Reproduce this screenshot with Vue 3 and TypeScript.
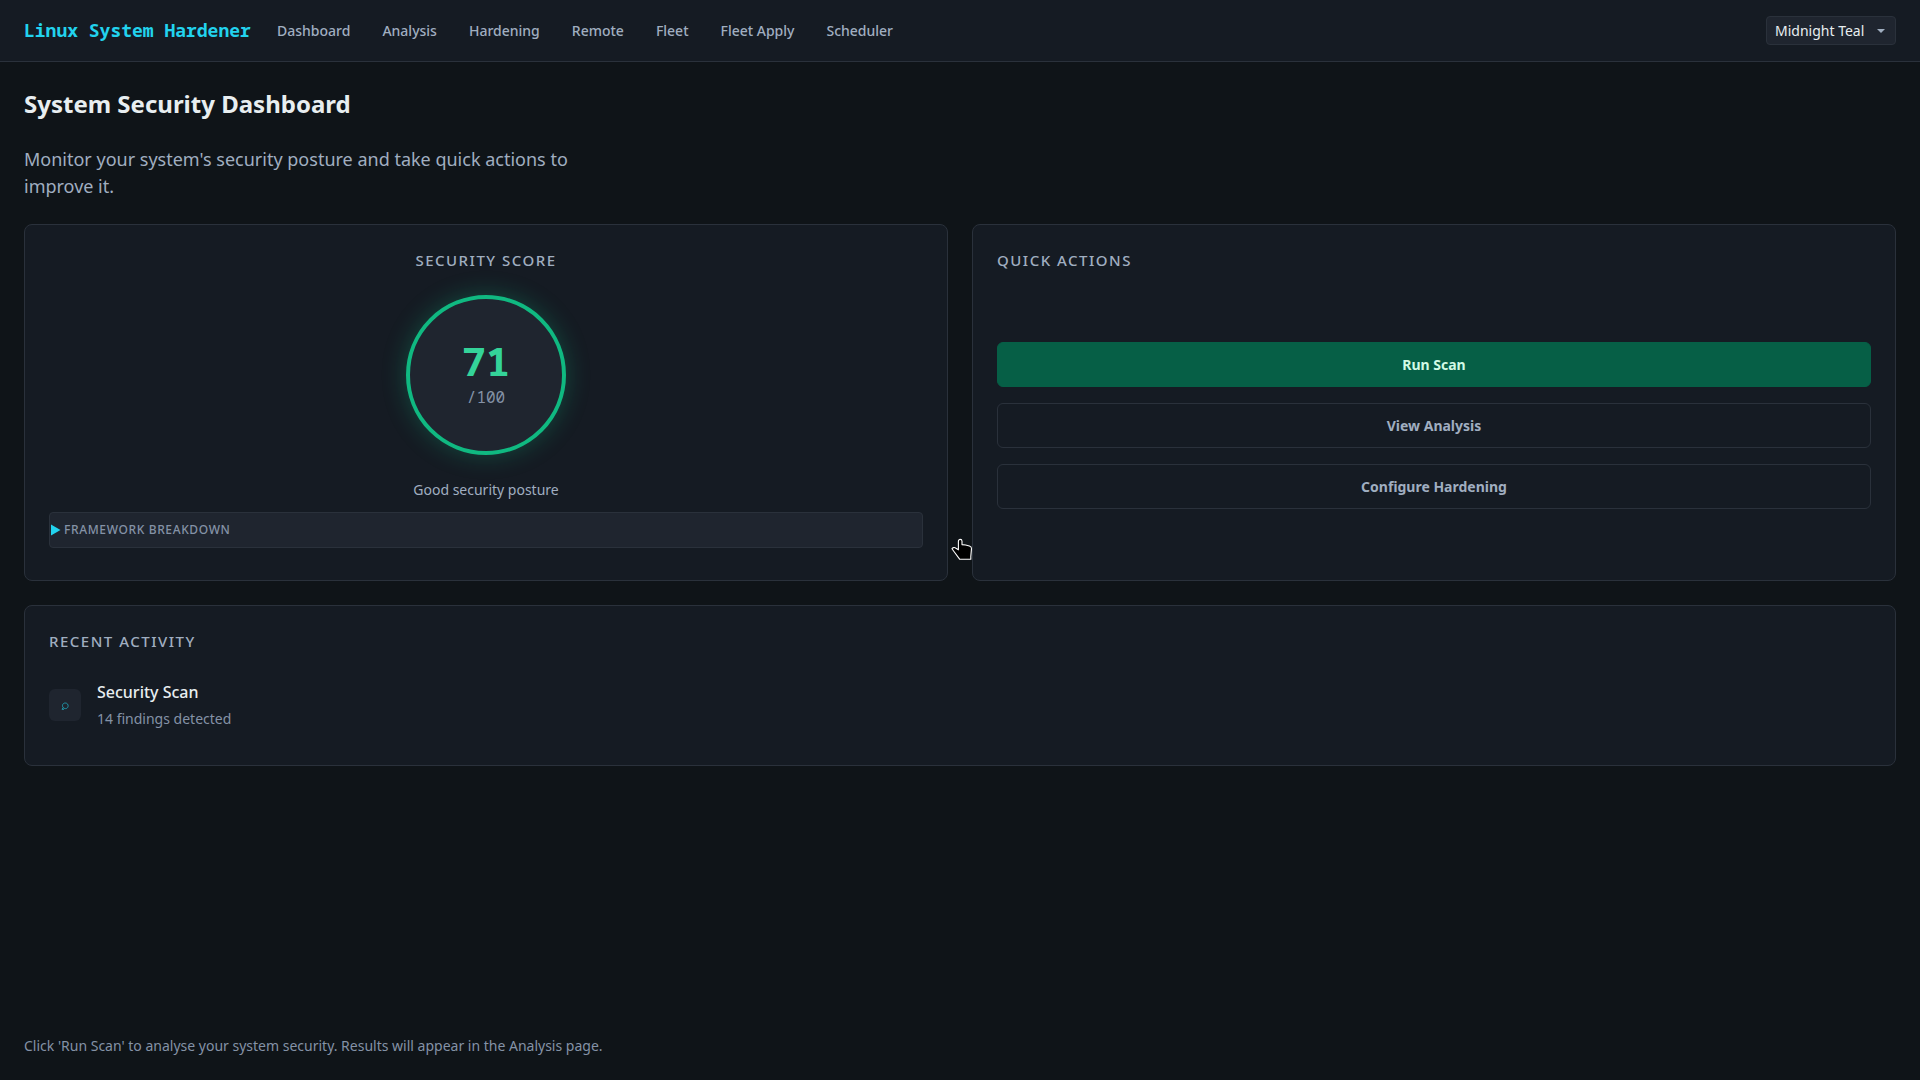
<script setup lang="ts">
import { ref } from 'vue'

interface Activity {
  title: string
  detail: string
}

const navItems: string[] = ['Dashboard', 'Analysis', 'Hardening', 'Remote', 'Fleet', 'Fleet Apply', 'Scheduler']
const theme = ref<string>('Midnight Teal')
const score = ref<number>(71)
const activities = ref<Activity[]>([
  { title: 'Security Scan', detail: '14 findings detected' },
])
</script>

<template>
  <div class="app">
    <header class="topbar">
      <span class="brand">Linux System Hardener</span>
      <nav class="nav">
        <a v-for="item in navItems" :key="item" class="nav-link">{{ item }}</a>
      </nav>
      <div class="theme-select">
        <span>{{ theme }}</span>
        <svg class="caret" width="8" height="4" viewBox="0 0 8 4"><path d="M0 0h8L4 4z" fill="currentColor" /></svg>
      </div>
    </header>

    <main class="content">
      <h1 class="title">System Security Dashboard</h1>
      <p class="lead">Monitor your system's security posture and take quick actions to improve it.</p>

      <div class="grid">
        <section class="card score-card">
          <h2 class="card-title">Security Score</h2>
          <div class="ring">
            <span class="score">{{ score }}</span>
            <span class="max">/100</span>
          </div>
          <p class="posture">Good security posture</p>
          <div class="breakdown">
            <svg class="marker" width="10" height="12" viewBox="0 0 10 12"><path d="M0 0.5L9.5 6 0 11.5z" fill="currentColor" /></svg>
            <span>Framework Breakdown</span>
          </div>
        </section>

        <section class="card actions-card">
          <h2 class="card-title">Quick Actions</h2>
          <div class="actions">
            <button class="btn primary">Run Scan</button>
            <button class="btn">View Analysis</button>
            <button class="btn">Configure Hardening</button>
          </div>
        </section>
      </div>

      <section class="card activity-card">
        <h2 class="card-title">Recent Activity</h2>
        <div v-for="a in activities" :key="a.title" class="activity">
          <span class="activity-icon">
            <svg width="8" height="8" viewBox="0 0 8 8" fill="none" stroke="currentColor" stroke-width="1">
              <path d="M2.2 5.6C0.6 3.6 1.8 1 4.2 1C6.4 1 7.5 2.8 7 4.6C6.7 5.8 5.8 6.6 4.4 6.6C3.5 6.6 2.7 6.2 2.2 5.6L1 7.3H3" />
            </svg>
          </span>
          <div class="activity-text">
            <span class="activity-title">{{ a.title }}</span>
            <span class="activity-detail">{{ a.detail }}</span>
          </div>
        </div>
      </section>

      <p class="hint">Click 'Run Scan' to analyse your system security. Results will appear in the Analysis page.</p>
    </main>

    <svg class="pointer" width="22" height="23" viewBox="0 0 22 23">
      <path
        d="M7.4 11.8V3.2C7.4 0.8 11 0.8 11 3.2V6.6L14.6 7L18.4 8C20 8.6 20.6 9.2 20.5 10.6L19.8 18.4V21.3H8.8L2.6 13L1 10.8C1.6 9.4 3.6 9.2 5 10.2Z"
        fill="#000"
        stroke="#fff"
        stroke-width="1.1"
        stroke-linejoin="round"
      />
    </svg>
  </div>
</template>

<style>
body {
  background: #0f1419;
}
</style>

<style scoped>
.app {
  position: relative;
  display: flex;
  flex-direction: column;
  height: 100vh;
  overflow: hidden;
  box-sizing: border-box;
  background: #0f1418;
  color: #e8eef0;
  font-family: 'Noto Sans', sans-serif;
  font-size: 14px;
  line-height: 21px;
}

.app * {
  box-sizing: border-box;
}

h1,
h2,
p {
  margin: 0;
}

.topbar {
  display: flex;
  align-items: center;
  height: 62px;
  flex: none;
  padding: 0 24px;
  background: #151b23;
  border-bottom: 1px solid #2a313b;
}

.brand {
  width: 227px;
  font-family: 'Noto Sans Mono', 'DejaVu Sans Mono', monospace;
  font-size: 18px;
  font-weight: 700;
  color: #22d3ee;
  white-space: nowrap;
}

.nav {
  display: flex;
  gap: 32px;
  margin-left: 26px;
}

.nav-link {
  font-weight: 500;
  color: #a0aec0;
  white-space: nowrap;
}

.theme-select {
  display: flex;
  align-items: center;
  justify-content: space-between;
  width: 130px;
  height: 29px;
  margin-left: auto;
  padding: 0 10px 0 8px;
  border: 1px solid #2a313b;
  border-radius: 4px;
  background: #1f252f;
}

.caret {
  color: #a0aec0;
}

.content {
  display: flex;
  flex-direction: column;
  flex: 1;
  padding: 24px;
}

.title {
  font-size: 24px;
  line-height: 36px;
  font-weight: 700;
}

.lead {
  max-width: 600px;
  margin: 24px 0;
  font-size: 18px;
  line-height: 27px;
  color: #a0aec0;
}

.grid {
  display: grid;
  grid-template-columns: 1fr 1fr;
  gap: 24px;
  height: 357px;
}

.card {
  display: flex;
  flex-direction: column;
  padding: 24px;
  border: 1px solid #2a313b;
  border-radius: 8px;
  background: #151b23;
}

.card-title {
  font-size: 15px;
  line-height: 22px;
  font-weight: 500;
  letter-spacing: 1.5px;
  text-transform: uppercase;
  color: #a0aec0;
}

.score-card {
  align-items: center;
}

.ring {
  display: flex;
  flex-direction: column;
  align-items: center;
  width: 160px;
  height: 160px;
  margin: 24px 0;
  padding-top: 42px;
  border: 4px solid #10b981;
  border-radius: 50%;
  background: #1f252f;
  box-shadow: 0 0 24px rgba(16, 185, 129, 0.3);
  font-family: 'Noto Sans Mono', 'DejaVu Sans Mono', monospace;
}

.score {
  font-size: 40px;
  line-height: 40px;
  font-weight: 700;
  color: #34d399;
}

.max {
  margin-top: 4px;
  font-size: 16px;
  line-height: 24px;
  color: #8492a6;
}

.posture {
  color: #a0aec0;
}

.breakdown {
  display: flex;
  align-items: center;
  align-self: stretch;
  gap: 3px;
  height: 36px;
  margin-top: 12px;
  padding: 0 0 1px 1px;
  border: 1px solid #2a313b;
  border-radius: 4px;
  background: #1f252f;
  font-size: 12px;
  line-height: 18px;
  font-weight: 500;
  letter-spacing: 0.63px;
  text-transform: uppercase;
  color: #8492a6;
}

.marker {
  color: #22d3ee;
}

.actions {
  display: flex;
  flex: 1;
  flex-direction: column;
  justify-content: center;
  gap: 16px;
  margin-top: 24px;
}

.btn {
  height: 45px;
  padding: 0;
  border: 1px solid #2a313b;
  border-radius: 6px;
  background: transparent;
  font: 700 14px/21px 'Noto Sans', sans-serif;
  color: #a0aec0;
}

.btn.primary {
  border-color: #065f46;
  background: #065f46;
  color: #d1fae5;
}

.activity-card {
  height: 161px;
  margin-top: 24px;
}

.activity {
  display: flex;
  align-items: center;
  gap: 16px;
  margin-top: 16px;
  padding: 12px 0;
}

.activity-icon {
  display: flex;
  align-items: center;
  justify-content: center;
  width: 32px;
  height: 32px;
  padding-top: 3px;
  border-radius: 6px;
  background: #1f252f;
  color: #2196a8;
}

.activity-text {
  display: flex;
  flex-direction: column;
  gap: 4px;
}

.activity-title {
  font-size: 16px;
  line-height: 24px;
  font-weight: 500;
}

.activity-detail {
  color: #8492a6;
}

.hint {
  margin-top: auto;
  color: #8492a6;
}

.pointer {
  position: absolute;
  left: 951px;
  top: 538px;
}
</style>
